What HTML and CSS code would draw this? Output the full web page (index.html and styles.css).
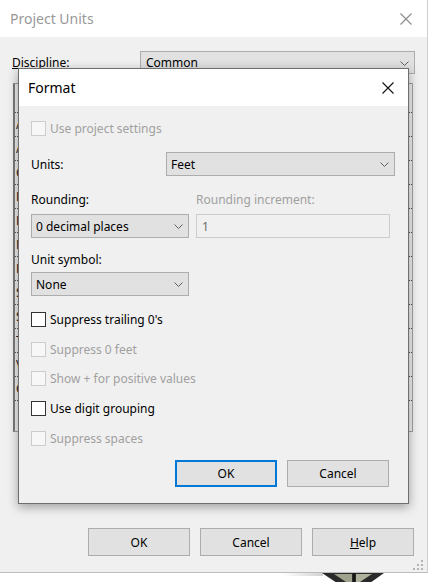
FILE: index.html
```html
<!DOCTYPE html>
<html>
<head>
<meta charset="utf-8">
<link rel="stylesheet" href="styles.css">
</head>
<body>
<div class="screen">
  <div class="main-dlg">
    <div class="titlebar main-title">
      <span class="title-text inactive">Project Units</span>
      <svg class="close" width="12" height="12" viewBox="0 0 12 12"><path d="M0.5 0.5 L11.5 11.5 M11.5 0.5 L0.5 11.5" stroke="#8a8a8a" stroke-width="1.1" fill="none"/></svg>
    </div>
    <div class="main-body">
      <div class="disc-row">
        <span class="disc-label"><u>D</u>iscipline:</span>
        <div class="combo disc-combo"><span>Common</span>
          <svg class="chev" width="9" height="5" viewBox="0 0 9 5"><path d="M0.5 0.5 L4.5 4.5 L8.5 0.5" stroke="#606060" fill="none"/></svg>
        </div>
      </div>
      <div class="listbox">
        <div class="lb-header"></div>
        <div class="lb-row">Angle</div>
        <div class="lb-row">Area</div>
        <div class="lb-row">Cost per Area</div>
        <div class="lb-row">Distance</div>
        <div class="lb-row">Length</div>
        <div class="lb-row">Mass Density</div>
        <div class="lb-row">Rotation Angle</div>
        <div class="lb-row">Slope</div>
        <div class="lb-row">Speed</div>
        <div class="lb-row">Time</div>
        <div class="lb-row">Volume</div>
        <div class="lb-row">Currency</div>
      </div>
      <div class="main-buttons">
        <button class="btn main-btn">OK</button>
        <button class="btn main-btn">Cancel</button>
        <button class="btn main-btn"><u>H</u>elp</button>
      </div>
    </div>
    <svg class="grip" width="12" height="12" viewBox="0 0 12 12">
      <rect x="9" y="1" width="2" height="2" fill="#b4b4b4"/>
      <rect x="5" y="5" width="2" height="2" fill="#b4b4b4"/>
      <rect x="9" y="5" width="2" height="2" fill="#b4b4b4"/>
      <rect x="1" y="9" width="2" height="2" fill="#b4b4b4"/>
      <rect x="5" y="9" width="2" height="2" fill="#b4b4b4"/>
      <rect x="9" y="9" width="2" height="2" fill="#b4b4b4"/>
    </svg>
  </div>

  <div class="fmt-dlg">
    <div class="titlebar fmt-title">
      <span class="title-text">Format</span>
      <svg class="close" width="12" height="12" viewBox="0 0 12 12"><path d="M0.5 0.5 L11.5 11.5 M11.5 0.5 L0.5 11.5" stroke="#111" stroke-width="1.1" fill="none"/></svg>
    </div>
    <div class="fmt-body">
      <div class="cb disabled"><span class="box"></span><span class="cb-label">Use project settings</span></div>

      <div class="units-row">
        <span class="units-label">Units:</span>
        <div class="combo units-combo"><span>Feet</span>
          <svg class="chev" width="9" height="5" viewBox="0 0 9 5"><path d="M0.5 0.5 L4.5 4.5 L8.5 0.5" stroke="#606060" fill="none"/></svg>
        </div>
      </div>

      <div class="round-labels">
        <span>Rounding:</span>
        <span class="dim">Rounding increment:</span>
      </div>
      <div class="round-inputs">
        <div class="combo"><span>0 decimal places</span>
          <svg class="chev" width="9" height="5" viewBox="0 0 9 5"><path d="M0.5 0.5 L4.5 4.5 L8.5 0.5" stroke="#606060" fill="none"/></svg>
        </div>
        <div class="textbox">1</div>
      </div>

      <div class="sym-label">Unit symbol:</div>
      <div class="sym-row">
        <div class="combo sym-combo"><span>None</span>
          <svg class="chev" width="9" height="5" viewBox="0 0 9 5"><path d="M0.5 0.5 L4.5 4.5 L8.5 0.5" stroke="#606060" fill="none"/></svg>
        </div>
      </div>

      <div class="cb-list">
        <div class="cb"><span class="box"></span><span class="cb-label">Suppress trailing 0's</span></div>
        <div class="cb disabled"><span class="box"></span><span class="cb-label">Suppress 0 feet</span></div>
        <div class="cb disabled"><span class="box"></span><span class="cb-label">Show + for positive values</span></div>
        <div class="cb"><span class="box"></span><span class="cb-label">Use digit grouping</span></div>
        <div class="cb disabled"><span class="box"></span><span class="cb-label">Suppress spaces</span></div>
      </div>

      <div class="fmt-buttons">
        <button class="btn fmt-btn default">OK</button>
        <button class="btn fmt-btn">Cancel</button>
      </div>
    </div>
  </div>

  <div class="under-shadow"></div>
  <svg class="viewcube" width="64" height="10" viewBox="0 0 64 10">
    <polygon points="0,0 62,0 48,10 15,10" fill="#2a2a2a"/>
    <polygon points="12,1 30,1 30,9 24,9" fill="#9fa28c"/>
    <polygon points="34,1 50,1 38,9 34,9" fill="#aeb19c"/>
    <line x1="32" y1="0" x2="32" y2="10" stroke="#151515" stroke-width="2"/>
  </svg>
</div>
</body>
</html>
```

FILE: styles.css
```css
body {
  margin: 0;
  background: #ffffff;
  font-family: "Noto Sans", "Open Sans", sans-serif;
  font-size: 12px;
  color: #000;
}

.screen {
  position: relative;
  width: 428px;
  height: 582px;
  overflow: hidden;
  background: #ffffff;
}

/* ---------- background dialog ---------- */
.main-dlg {
  position: relative;
  width: 428px;
  height: 573px;
  box-sizing: border-box;
  background: #f0f0f0;
  border-right: 1px solid #cfcfcf;
  border-bottom: 1px solid #bdbdbd;
  display: flex;
  flex-direction: column;
}

.titlebar {
  flex-shrink: 0;
  height: 37px;
  background: #ffffff;
  display: flex;
  align-items: center;
  justify-content: space-between;
  box-sizing: border-box;
}

.main-title {
  padding: 0 15px 0 10px;
}

.title-text {
  font-size: 14px;
  line-height: 20px;
}

.title-text.inactive {
  color: #999999;
}

.close {
  display: block;
}

.main-body {
  padding: 14px 0 0 12px;
  display: flex;
  flex-direction: column;
}

.disc-row {
  display: flex;
  align-items: center;
  height: 23px;
}

.disc-label {
  width: 128px;
  line-height: 16px;
  padding-top: 1px;
}

.combo {
  box-sizing: border-box;
  height: 24px;
  background: #e1e1e1;
  border: 1px solid #adadad;
  display: flex;
  align-items: center;
  justify-content: space-between;
  padding: 0 5px 0 4px;
  flex-shrink: 0;
}

.combo .chev {
  display: block;
  margin-top: 1px;
}

.disc-combo {
  width: 275px;
  height: 23px;
  padding-left: 5px;
}

.listbox {
  margin: 9px 0 0 1px;
  width: 400px;
  height: 349px;
  box-sizing: border-box;
  border: 1px solid #a0a0a0;
  border-left: 2px solid #7a7a7a;
  background: #f0f0f0;
  display: flex;
  flex-direction: column;
}

.lb-header {
  height: 28px;
  border-bottom: 1px dotted #555;
}

.lb-row {
  height: 23px;
  line-height: 23px;
  padding-left: 1px;
  border-bottom: 1px dotted #555;
  color: #1a1a1a;
  white-space: nowrap;
}

.main-buttons {
  margin-top: 96px;
  width: 402px;
  display: flex;
  justify-content: flex-end;
  gap: 10px;
}

.btn {
  box-sizing: border-box;
  font-family: "Noto Sans", "Open Sans", sans-serif;
  font-size: 12px;
  color: #000;
  background: #e1e1e1;
  border: 1px solid #adadad;
  padding: 0;
  margin: 0;
  border-radius: 0;
}

.main-btn {
  width: 102px;
  height: 28px;
}

.grip {
  position: absolute;
  right: 3px;
  bottom: 1px;
}

/* ---------- Format dialog ---------- */
.fmt-dlg {
  position: absolute;
  left: 18px;
  top: 68px;
  width: 391px;
  height: 436px;
  box-sizing: border-box;
  background: #f0f0f0;
  border: 1px solid #6e6e6e;
  box-shadow: 0 3px 10px rgba(0, 0, 0, 0.35);
  display: flex;
  flex-direction: column;
}

.fmt-title {
  padding: 0 14px 0 9px;
}

.fmt-body {
  padding: 15px 12px 0 12px;
  display: flex;
  flex-direction: column;
}

.cb {
  display: flex;
  align-items: center;
  height: 15px;
  gap: 4px;
}

.box {
  width: 15px;
  height: 15px;
  box-sizing: border-box;
  border: 1px solid #333333;
  background: #ffffff;
}

.cb-label {
  line-height: 15px;
}

.cb.disabled .box {
  border-color: #cccccc;
  background: #f7f7f7;
}

.cb.disabled .cb-label,
.dim {
  color: #a0a0a0;
}

.units-row {
  margin-top: 16px;
  display: flex;
  align-items: center;
}

.units-label {
  width: 135px;
  flex-shrink: 0;
}

.units-combo {
  width: 229px;
}

.round-labels {
  margin-top: 16px;
  height: 16px;
  line-height: 16px;
  display: grid;
  grid-template-columns: 158px 194px;
  column-gap: 7px;
}

.round-inputs {
  margin-top: 6px;
  display: grid;
  grid-template-columns: 158px 194px;
  column-gap: 7px;
}

.textbox {
  box-sizing: border-box;
  height: 24px;
  border: 1px solid #cccccc;
  background: #f0f0f0;
  color: #6d6d6d;
  padding-left: 5px;
  display: flex;
  align-items: center;
}

.sym-label {
  margin-top: 14px;
  height: 16px;
  line-height: 16px;
}

.sym-row {
  margin-top: 4px;
  display: flex;
}

.sym-combo {
  width: 158px;
}

.cb-list {
  margin-top: 16px;
  display: flex;
  flex-direction: column;
  gap: 14.7px;
}

.fmt-buttons {
  margin-top: 14px;
  padding-right: 7px;
  display: flex;
  justify-content: flex-end;
  gap: 10px;
}

.fmt-btn {
  width: 102px;
  height: 27px;
}

.fmt-btn.default {
  border: 2px solid #0078d7;
}

.under-shadow {
  position: absolute;
  left: 283px;
  top: 573px;
  width: 40px;
  height: 3px;
  background: linear-gradient(to right, rgba(0,0,0,0), rgba(0,0,0,0.18));
}

.viewcube {
  position: absolute;
  left: 322px;
  top: 573px;
}
```
